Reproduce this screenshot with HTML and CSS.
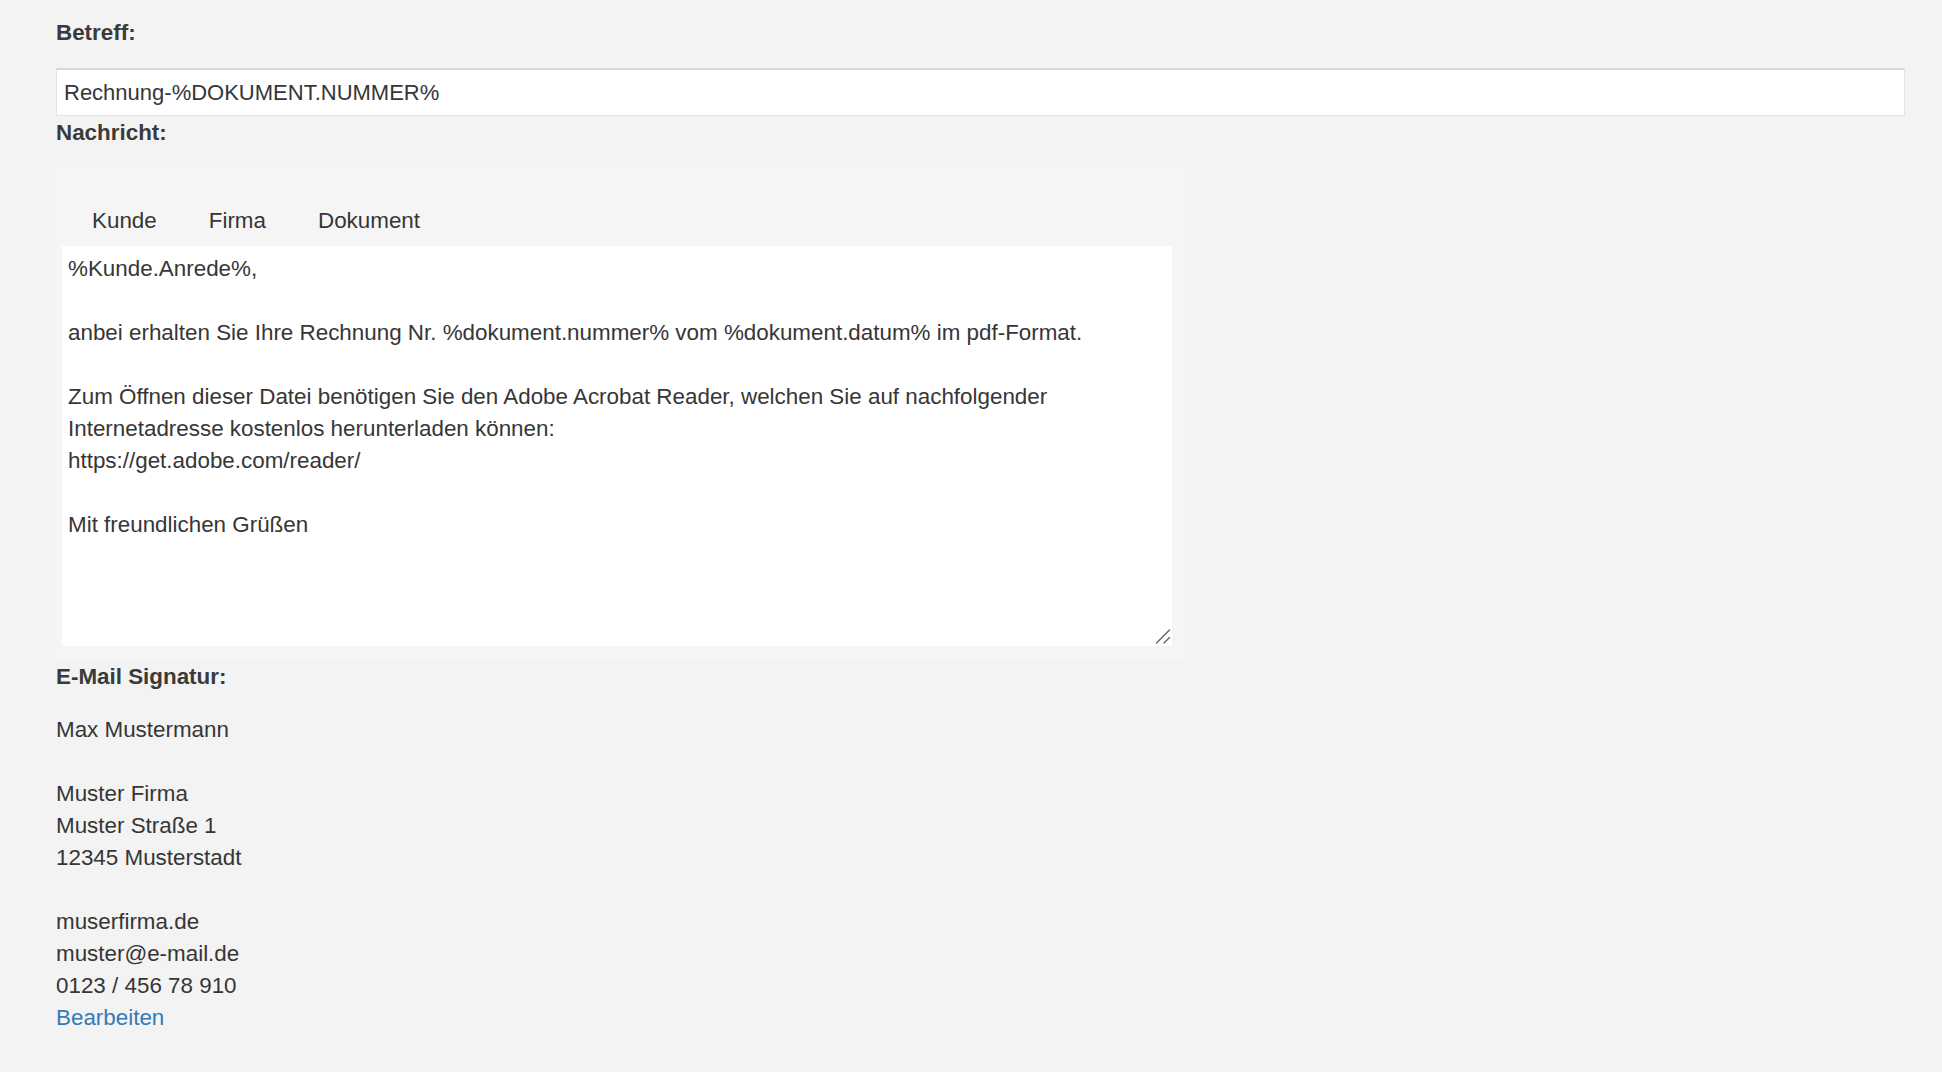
FILE: index.html
```html
<!DOCTYPE html>
<html lang="de">
<head>
<meta charset="utf-8">
<title>E-Mail Vorlage</title>
<link rel="stylesheet" href="styles.css">
</head>
<body>
<div class="page">
  <label class="field-label label-subject" for="subject">Betreff:</label>
  <input id="subject" class="subject" type="text" value="Rechnung-%DOKUMENT.NUMMER%">
  <label class="field-label label-message" for="message">Nachricht:</label>
  <div class="editor">
    <ul class="tabs">
      <li class="tab">Kunde</li>
      <li class="tab">Firma</li>
      <li class="tab">Dokument</li>
    </ul>
    <div class="message-wrap">
      <textarea id="message" class="message">%Kunde.Anrede%,

anbei erhalten Sie Ihre Rechnung Nr. %dokument.nummer% vom %dokument.datum% im pdf-Format.

Zum Öffnen dieser Datei benötigen Sie den Adobe Acrobat Reader, welchen Sie auf nachfolgender
Internetadresse kostenlos herunterladen können:
https://get.adobe.com/reader/

Mit freundlichen Grüßen</textarea>
      <svg class="grip" width="16" height="16" viewBox="0 0 16 16" aria-hidden="true">
        <line x1="1.5" y1="15" x2="14.5" y2="2" stroke="#666" stroke-width="1.4" stroke-linecap="round"/>
        <line x1="9" y1="15" x2="14.5" y2="9.5" stroke="#666" stroke-width="1.4" stroke-linecap="round"/>
      </svg>
    </div>
  </div>
  <div class="field-label label-signature">E-Mail Signatur:</div>
  <div class="signature">
    <div class="sig-line">Max Mustermann</div>
    <div class="sig-line sig-blank"></div>
    <div class="sig-line">Muster Firma</div>
    <div class="sig-line">Muster Straße 1</div>
    <div class="sig-line">12345 Musterstadt</div>
    <div class="sig-line sig-blank"></div>
    <div class="sig-line">muserfirma.de</div>
    <div class="sig-line">muster@e-mail.de</div>
    <div class="sig-line">0123 / 456 78 910</div>
    <a class="edit-link" href="#">Bearbeiten</a>
  </div>
</div>
</body>
</html>
```

FILE: styles.css
```css
html, body {
  margin: 0;
  padding: 0;
  background: #f3f3f3;
}

body {
  font-family: "Liberation Sans", Arial, Helvetica, sans-serif;
  font-size: 22.4px;
  line-height: 32px;
  color: #363636;
}

.page {
  display: flex;
  flex-direction: column;
  align-items: flex-start;
  padding: 17px 37px 40px 56px;
}

.field-label {
  display: block;
  font-weight: bold;
  height: 32px;
  color: #3a3a3a;
}

.label-subject {
  margin-bottom: 19px;
}

.label-message {
  padding-top: 1px;
  margin-bottom: 18px;
}

.label-signature {
  padding-top: 1px;
  margin-bottom: 21px;
}

.subject {
  box-sizing: border-box;
  width: 100%;
  height: 48px;
  margin: 0;
  padding: 0 7px;
  font-family: inherit;
  font-size: 22px;
  color: #363636;
  background: #fff;
  border: 1px solid #e3e3e3;
  border-top: 2px solid #d8d8d8;
  border-radius: 0;
  outline: none;
}

.editor {
  box-sizing: border-box;
  width: 1134px;
  background: #f5f5f5;
  padding: 27px 18px 14px 6px;
}

.tabs {
  display: flex;
  list-style: none;
  margin: 0;
  padding: 0 0 0 4px;
}

.tab {
  padding: 11px 26px 9px;
  line-height: 32px;
}

.message-wrap {
  position: relative;
  width: 1110px;
  height: 400px;
}

.message {
  display: block;
  box-sizing: border-box;
  width: 100%;
  height: 100%;
  margin: 0;
  padding: 7px 6px;
  border: none;
  border-radius: 0;
  outline: none;
  resize: none;
  background: #fff;
  font-family: inherit;
  font-size: 22.4px;
  line-height: 32px;
  color: #363636;
  overflow: hidden;
}

.grip {
  position: absolute;
  right: 1px;
  bottom: 2px;
}

.signature {
  display: flex;
  flex-direction: column;
}

.sig-line {
  height: 32px;
  white-space: nowrap;
}

.edit-link {
  color: #337ab7;
  text-decoration: none;
  line-height: 32px;
}
```
